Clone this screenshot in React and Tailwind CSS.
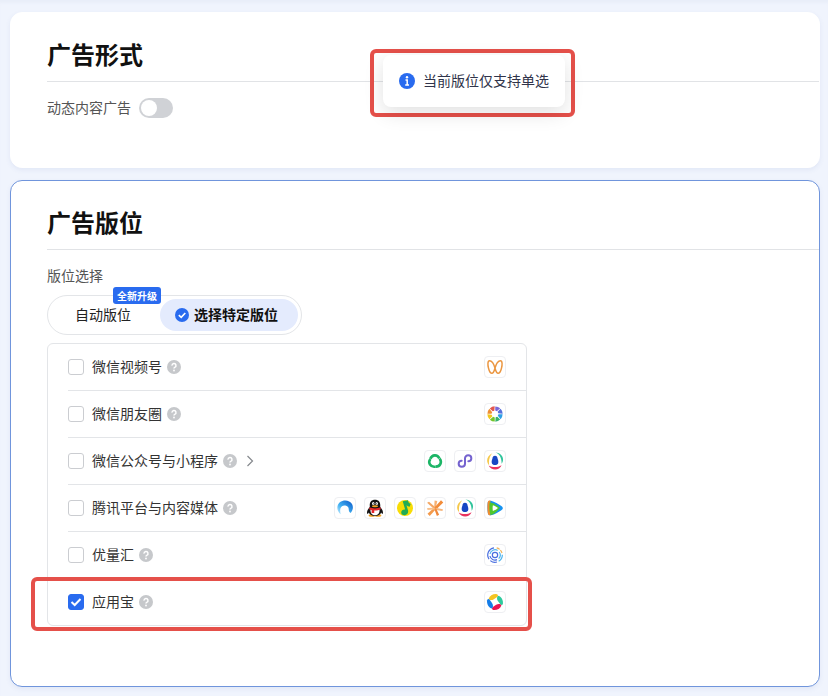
import { useState } from "react";

const ChannelsIcon = () => (
  <svg viewBox="0 0 24 24" className="size-4" fill="none" stroke="#eb9640" strokeWidth="2.200" strokeLinejoin="round">
    <path d="M12 13.500C10.500 8 7 2.500 3.800 2.500C.8 2.500 1 9 2.200 13.500C3.300 18 5 21.500 7.300 21.500C9.600 21.500 11 17.500 12 13.500C13.500 8 17 2.500 20.200 2.500C23.200 2.500 23 9 21.800 13.500C20.700 18 19 21.500 16.700 21.500C14.400 21.500 13 17.500 12 13.500Z" />
  </svg>
);

const blades = ["#7a68d8", "#5570dc", "#2d9fe6", "#35b36a", "#74c52c", "#f2c61c", "#ee8e33", "#e2574f"];

const MomentsIcon = () => (
  <svg viewBox="0 0 24 24" className="size-4">
    {blades.map((color, i) => (
      <path
        key={color}
        d="M12.400 .6A11.400 11.400 0 0 1 19.800 3.500L14.800 7.800L12.400 6.800Z"
        fill={color}
        transform={`rotate(${i * 45} 12 12)`}
      />
    ))}
  </svg>
);

const OfficialIcon = () => (
  <svg viewBox="0 0 24 24" className="size-4" fill="none" stroke="#1cb566" strokeWidth="4">
    {[0, 120, 240].map((deg) => (
      <path key={deg} d="M5 8.500C7.500 2.500 15.500 1.500 18.600 8.300" transform={`rotate(${deg} 12 12.500)`} />
    ))}
  </svg>
);

const MiniProgramIcon = () => (
  <svg viewBox="0 0 24 24" className="size-4" fill="none" stroke="#7563cf" strokeWidth="3" strokeLinecap="round">
    <path d="M7 11.500C4.500 11.500 2.500 13.500 2.500 16C2.500 18.600 4.500 20.500 7.200 20.500C10 20.500 12 18.600 12 16V8C12 5.400 14 3.500 16.800 3.500C19.500 3.500 21.500 5.400 21.500 8C21.500 10.500 19.500 12.500 17 12.500" />
  </svg>
);

const AllianceIcon = () => (
  <svg viewBox="0 0 24 24" className="size-[18px]">
    <path d="M8.500 1.500C5 5 3.200 10.500 4.200 17.500C-.2 13.500 .5 5 8.500 1.500Z" fill="#f5c84b" />
    <path d="M12.500 .8C17.500 2.500 21 7.500 20.800 15.500C25 10.500 22.500 1.500 12.500 .8Z" fill="#2fc49b" />
    <path d="M3.500 18C9 21 15.500 20.800 20.800 17.500C18 25 7 25 3.500 18Z" fill="#e8325f" />
    <path
      d="M12 5C9.800 5 8.700 6.700 8.500 9C7.800 10.800 7.300 12.500 7.700 14.500C8.300 16.300 9.800 17.300 12 17.300C14.200 17.300 15.700 16.300 16.300 14.500C16.700 12.500 16.200 10.800 15.500 9C15.300 6.700 14.200 5 12 5Z"
      fill="#1747c4"
    />
  </svg>
);

const BrowserIcon = () => (
  <svg viewBox="0 0 24 24" className="size-4">
    <defs>
      <linearGradient id="browser-ring" x1="0" y1="1" x2="1" y2="0">
        <stop offset="0" stopColor="#cdeeff" />
        <stop offset=".4" stopColor="#43b2f2" />
        <stop offset="1" stopColor="#0757c8" />
      </linearGradient>
    </defs>
    <path
      d="M5.500 21.500C-.8 16.500 -1 8 4.200 3.500C10 -1.200 19 0 22.500 6C25 10.500 23.800 15.500 20.500 19.500C20.500 19.500 17.500 18 17.600 14.500C17.800 11 15.700 8.800 12.500 8.300C9 7.800 6.200 9.500 5.200 12.500C4.300 15.500 4.800 18.500 5.500 21.500Z"
      fill="url(#browser-ring)"
    />
  </svg>
);

const PenguinIcon = () => (
  <svg viewBox="0 0 24 24" className="size-[18px]">
    <ellipse cx="8" cy="22" rx="4.500" ry="1.800" fill="#f0a020" />
    <ellipse cx="16" cy="22" rx="4.500" ry="1.800" fill="#f0a020" />
    <path
      d="M12 1C7.300 1 5 4 5 8V10.500C2.800 13 1 16.500 1.400 19C1.700 20.500 3 19.300 3.800 18C4.700 21 8 22.500 12 22.500C16 22.500 19.300 21 20.200 18C21 19.300 22.300 20.500 22.600 19C23 16.500 21.200 13 19 10.500V8C19 4 16.700 1 12 1Z"
      fill="#131313"
    />
    <path d="M6 13.500C5.500 18 7.500 21.500 12 21.500C16.500 21.500 18.500 18 18 13.500Z" fill="#fff" />
    <path d="M4.800 11C8.500 13 15.500 13 19.200 11L19.800 13.500C17 15 13.500 15.400 11 15.200V18.500H7.500V14.700C6.200 14.400 5 14 4.200 13.500Z" fill="#e5252a" />
    <ellipse cx="9.700" cy="6" rx="1.600" ry="2" fill="#fff" />
    <ellipse cx="14.300" cy="6" rx="1.600" ry="2" fill="#fff" />
    <circle cx="10.200" cy="6.200" r=".7" fill="#131313" />
    <circle cx="13.800" cy="6.200" r=".7" fill="#131313" />
    <ellipse cx="12" cy="9.600" rx="4.200" ry="1.300" fill="#f0a020" />
  </svg>
);

const MusicIcon = () => (
  <svg viewBox="0 0 24 24" className="size-4">
    <circle cx="12" cy="12" r="12" fill="#f8dc05" />
    <path
      d="M8.500 2L16.500 .3C16.500 3 18 4.800 20.500 6L19 10C17.200 9.600 15.500 8.800 14.200 7.700L16.500 15.500C17.500 19.500 15 22.600 11.500 22.800C8.500 23 6.300 21.200 6.300 18.600C6.300 15.800 9 13.800 12.200 14.200Z"
      fill="#22ac55"
    />
  </svg>
);

const BurstIcon = () => (
  <svg viewBox="0 0 24 24" className="size-[18px]" fill="#f39a4c">
    <path d="M1.500 5L4 3.500L12.500 11L11 13.500Z" fill="#f4a764" />
    <path d="M11.500 2L15 2.500L13 12L10.800 12Z" fill="#f6b071" />
    <path d="M20 1.500L23 4.500L13.500 14L11 11.500Z" fill="#f28b38" />
    <path d="M13 11.500L22.500 13.500L22 16L13 14.500Z" fill="#f6b57a" />
    <path d="M11 13L13.500 12.500L17.500 21L14.500 22.500Z" fill="#f0883a" />
    <path d="M11 11.500L13 13.500L5 22.500L2 19.500Z" fill="#f39a4c" />
    <path d="M11.500 11.500V14L2 14.500L1.500 12Z" fill="#f8c08c" />
  </svg>
);

const VideoIcon = () => (
  <svg viewBox="0 0 24 24" className="size-4">
    <path d="M1 4C1.300 1.500 3.500 .5 6 1.200C11.500 2.700 17 6 21.500 9C24.500 11.200 24.500 13.200 21.500 15.300C17 18.500 11.500 21.500 6 22.800C3.500 23.400 1.700 22.500 1.300 20C.5 15 .5 9 1 4Z" fill="#1592f0" />
    <path d="M1 4C1.300 1.500 3 .6 5.200 1C4.500 8 4.500 16 5.200 23C3 23.300 1.700 22.500 1.300 20C.5 15 .5 9 1 4Z" fill="#f28b2d" />
    <path d="M4 3.500C11 5.500 15.500 8 19.500 12C15.500 17 11.500 20.500 5.500 23C3.300 17 3.300 9.500 4 3.500Z" fill="#4fc72d" />
    <path d="M8.800 7.800C12 8.800 14.300 10.200 16.500 12C14.300 14 12 15.300 8.800 16.400C8.300 13.500 8.300 10.700 8.800 7.800Z" fill="#fff" />
  </svg>
);

const SwirlIcon = () => (
  <svg viewBox="0 0 24 24" className="size-4" fill="none" strokeWidth="1.800">
    <path d="M10.500 1.200A11 11 0 0 0 3 18.200" stroke="#4a6fe0" />
    <path d="M5 20.400A11 11 0 0 0 15 22.500" stroke="#4a6fe0" />
    <path d="M17.500 21.500A11 11 0 0 0 23 11.500" stroke="#4fb4ee" />
    <path d="M14.500 1.300A11 11 0 0 1 22.500 9" stroke="#efb35a" strokeDasharray="5 1.500" />
    <path d="M16 5.200A7.700 7.700 0 0 0 4.500 10.500" stroke="#53b7f0" />
    <path d="M4.400 13.500A7.700 7.700 0 0 0 15 19" stroke="#4a6fe0" />
    <path d="M17.500 17.500A7.700 7.700 0 0 0 18.300 7.500" stroke="#53b7f0" />
    <circle cx="12" cy="12" r="4" stroke="#4a6fe0" />
  </svg>
);

const AppStoreIcon = () => (
  <svg viewBox="0 0 24 24" className="size-[18px]">
    <path d="M3.500 7.500C5 3 10 .8 14.500 1.500C16.500 2 16.500 4 14.800 5.200L10.500 8.200C8 9.800 4.500 9.800 3.500 7.500Z" fill="#f5c422" />
    <path d="M16.500 3.500C21 5 23.200 10 22.500 14.500C22 16.500 20 16.500 18.800 14.800L15.800 10.500C14.200 8 14.200 4.500 16.500 3.500Z" fill="#2fca9d" />
    <path d="M20.500 16.500C19 21 14 23.200 9.500 22.500C7.500 22 7.500 20 9.200 18.800L13.500 15.800C16 14.200 19.500 14.200 20.500 16.500Z" fill="#ea1452" />
    <path d="M7.500 20.500C3 19 .8 14 1.500 9.500C2 7.500 4 7.500 5.200 9.200L8.200 13.500C9.800 16 9.800 19.500 7.500 20.500Z" fill="#147de8" />
  </svg>
);

const HelpIcon = () => (
  <svg viewBox="0 0 14 14" className="size-[14px]" aria-hidden="true">
    <circle cx="7" cy="7" r="7" fill="#c6c8cb" />
    <path d="M5 5.600A2 2 0 1 1 7.700 7.400C7.200 7.600 7 7.900 7 8.500" fill="none" stroke="#fff" strokeWidth="1.500" />
    <circle cx="7" cy="10.500" r=".9" fill="#fff" />
  </svg>
);

const CheckCircleIcon = () => (
  <svg viewBox="0 0 14 14" className="size-[14px]" aria-hidden="true">
    <circle cx="7" cy="7" r="7" fill="#296bef" />
    <path d="M3.800 7.200L6.200 9.400L10.300 5" fill="none" stroke="#fff" strokeWidth="1.600" />
  </svg>
);

const InfoIcon = () => (
  <svg viewBox="0 0 16 16" className="size-4" aria-hidden="true">
    <circle cx="8" cy="8" r="8" fill="#296bef" />
    <circle cx="8" cy="4.300" r="1.200" fill="#fff" />
    <path d="M6.500 7H8.200V12M6.200 12H10" fill="none" stroke="#fff" strokeWidth="1.500" />
  </svg>
);

const placements = [
  { id: "channels", label: "微信视频号", icons: [ChannelsIcon] },
  { id: "moments", label: "微信朋友圈", icons: [MomentsIcon] },
  { id: "official", label: "微信公众号与小程序", icons: [OfficialIcon, MiniProgramIcon, AllianceIcon], expandable: true },
  {
    id: "tencent",
    label: "腾讯平台与内容媒体",
    icons: [BrowserIcon, PenguinIcon, MusicIcon, BurstIcon, AllianceIcon, VideoIcon]
  },
  { id: "union", label: "优量汇", icons: [SwirlIcon] },
  { id: "store", label: "应用宝", icons: [AppStoreIcon], highlighted: true }
];

const Card = ({ title, className, children }) => (
  <section className={`rounded-xl border pl-9 shadow-[0_2px_5px_rgba(60,90,160,0.08)] ${className}`}>
    <h2 className="border-b border-[#e1e3e6] pt-[22px] pb-2 text-2xl leading-[38px] font-bold text-[#111]">{title}</h2>
    {children}
  </section>
);

const PlacementRow = ({ item, checked, onSelect }) => (
  <li className="group relative pl-5">
    <div className="flex h-[47px] items-center border-b border-[#e3e5e8] pr-5 group-last:h-[46px] group-last:border-b-0">
      <span className="grid size-4">
        <input
          id={item.id}
          type="checkbox"
          checked={checked}
          onChange={() => onSelect(item.id)}
          className="peer col-start-1 row-start-1 size-4 appearance-none rounded-[3px] border border-[#cbcdd1] bg-white checked:border-[#296bef] checked:bg-[#296bef]"
        />
        <svg
          viewBox="0 0 16 16"
          className="pointer-events-none col-start-1 row-start-1 hidden size-4 peer-checked:block"
          fill="none"
          stroke="#fff"
          strokeWidth="2"
        >
          <path d="M3.500 8L6.700 11L12.500 5" />
        </svg>
      </span>
      <label htmlFor={item.id} className="ml-2 pb-0.5 text-[#333]">
        {item.label}
      </label>
      <span className="ml-[5px]">
        <HelpIcon />
      </span>
      {item.expandable && (
        <button type="button" aria-label="展开" className="ml-2">
          <svg viewBox="0 0 10 12" className="h-3 w-[10px]" fill="none" stroke="#85888d" strokeWidth="1.200">
            <path d="M2.500 1L7.500 6L2.500 11" />
          </svg>
        </button>
      )}
      <div className="ml-auto flex gap-2">
        {item.icons.map((Icon, i) => (
          <span key={i} className="flex size-[22px] items-center justify-center rounded border border-[#eeeff2]">
            <Icon />
          </span>
        ))}
      </div>
    </div>
    {item.highlighted && (
      <div className="pointer-events-none absolute -top-0.5 -right-1.5 -bottom-1.5 -left-[17px] rounded-md border-4 border-[#e5504a]" />
    )}
  </li>
);

const App = () => {
  const [selected, setSelected] = useState("store");
  const [mode, setMode] = useState("specific");
  const [dynamic, setDynamic] = useState(false);

  return (
    <div className="relative min-h-screen bg-[#f0f4fd] pt-3 pr-2 pb-[9px] pl-[10px] font-['Noto_Sans_CJK_SC',sans-serif] text-sm leading-5 shadow-[inset_0_4px_3px_-1px_#e9eef9]">
      <Card title="广告形式" className="border-white bg-white pb-[49px]">
        <div className="mt-4 flex h-5 items-center gap-2">
          <label htmlFor="dynamic" className="pb-0.5 text-[#555]">
            动态内容广告
          </label>
          <input
            id="dynamic"
            type="checkbox"
            role="switch"
            checked={dynamic}
            onChange={(e) => setDynamic(e.target.checked)}
            className="h-5 w-[34px] appearance-none rounded-full bg-[#d0d2d6] p-0.5 before:block before:size-4 before:rounded-full before:bg-white checked:bg-[#296bef] checked:before:ml-[14px]"
          />
        </div>
      </Card>

      <Card title="广告版位" className="mt-3 border-[#7095dc] bg-white pb-[60px]">
        <p className="mt-[15px] text-[#555]">版位选择</p>
        <div className="mt-[10px] flex h-10 w-fit items-center gap-[5px] rounded-full border border-[#e3e5e8] p-[3px]">
          <button type="button" onClick={() => setMode("auto")} className="relative h-8 px-6 pb-0.5 text-[#222]">
            自动版位
            <span className="absolute -top-3 left-[62px] rounded-[3px] bg-[#296bef] px-1 text-[10px] leading-[17px] font-bold whitespace-nowrap text-white">
              全新升级
            </span>
          </button>
          <button
            type="button"
            aria-pressed={mode === "specific"}
            onClick={() => setMode("specific")}
            className="flex h-8 items-center gap-[5px] rounded-full bg-[#e4ebfd] pr-5 pl-[15px] font-bold text-[#111]"
          >
            <CheckCircleIcon />
            <span className="pb-0.5">选择特定版位</span>
          </button>
        </div>

        <ul className="mt-2 max-w-[480px] rounded-md border border-[#e3e5e8]">
          {placements.map((item) => (
            <PlacementRow key={item.id} item={item} checked={selected === item.id} onSelect={setSelected} />
          ))}
        </ul>
      </Card>

      <div className="absolute top-[49px] left-[370px] rounded-md border-4 border-[#e5504a] pt-0.5 pr-1.5 pb-1.5 pl-[9px]">
        <div
          role="status"
          className="flex h-[52px] items-center gap-2 rounded-lg bg-white px-4 text-[#30344a] shadow-[0_6px_20px_rgba(0,0,0,0.12)]"
        >
          <InfoIcon />
          <span className="pb-0.5">当前版位仅支持单选</span>
        </div>
      </div>
    </div>
  );
};

export default App;
